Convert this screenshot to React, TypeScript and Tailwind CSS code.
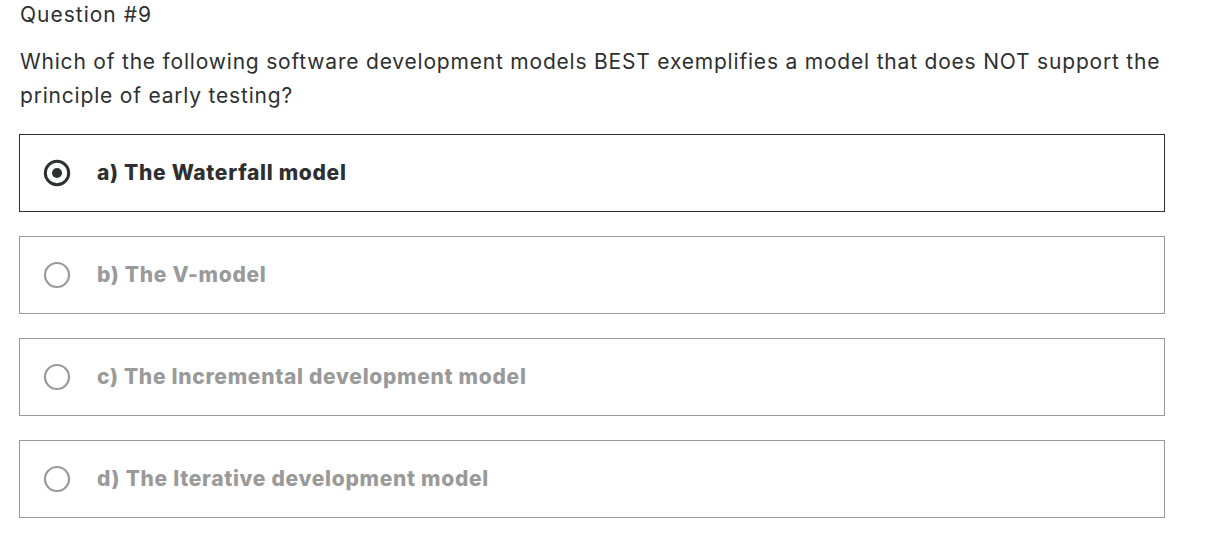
import React from "react";

const options = [
  { label: "a) The Waterfall model", selected: true },
  { label: "b) The V-model", selected: false },
  { label: "c) The Incremental development model", selected: false },
  { label: "d) The Iterative development model", selected: false },
];

export default function App() {
  return (
    <div
      className="w-[1206px] h-[542px] bg-white pl-[19px] text-[#2d2f31]"
      style={{ fontFamily: "Inter, 'Noto Sans', sans-serif" }}
    >
      <div className="pl-[1px] pt-[1px] text-[21px] leading-[28px] tracking-[1px]">Question #9</div>
      <div className="pl-[1px] mt-[16px] text-[21px] leading-[34px] tracking-[0.8px] w-[1175px]">
        Which of the following software development models BEST exemplifies a model that does NOT support the
        principle of early testing?
      </div>
      <div className="mt-[21px] flex flex-col gap-[24px]">
        {options.map((o) => (
          <div
            key={o.label}
            className={
              "w-[1146px] h-[78px] flex items-center pl-[23px] border " +
              (o.selected ? "border-[#2d2f31]" : "border-[#9a9a9a]")
            }
          >
            <svg width="28" height="28" viewBox="0 0 28 28" className="shrink-0">
              <circle
                cx="14"
                cy="14"
                r={o.selected ? 11.7 : 12}
                fill="none"
                stroke={o.selected ? "#2d2f31" : "#9a9a9a"}
                strokeWidth={o.selected ? 3 : 2.2}
              />
              {o.selected && <circle cx="14" cy="14" r="5" fill="#2d2f31" />}
            </svg>
            <span
              className={
                "ml-[26px] text-[21px] font-extrabold tracking-[0.7px] " +
                (o.selected ? "text-[#2d2f31]" : "text-[#9a9a9a]")
              }
            >
              {o.label}
            </span>
          </div>
        ))}
      </div>
    </div>
  );
}
